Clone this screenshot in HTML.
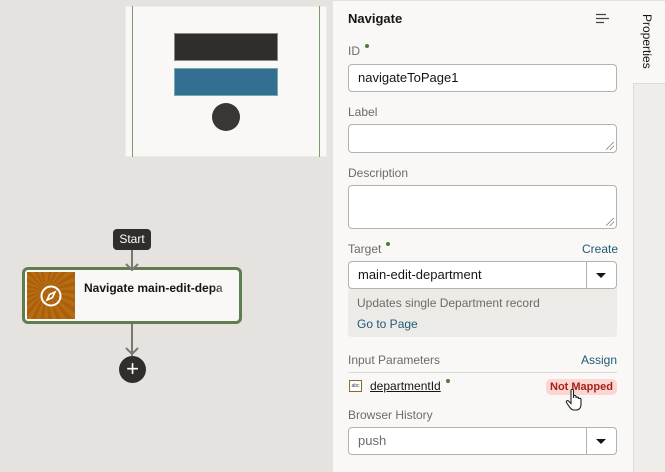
<!DOCTYPE html><html><head><style>
*{box-sizing:border-box;margin:0;padding:0}
body{width:665px;height:472px;position:relative;overflow:hidden;background:#e5e2df;font-family:"Liberation Sans",sans-serif;color:#161513}
.a{position:absolute}
.lbl{position:absolute;left:348px;font-size:12px;color:#6f6a65}
.inp{position:absolute;left:348px;width:269px;background:#fff;border:1px solid #b5b2ae;border-radius:4px;font-size:13px;padding-left:9px}
.dot{display:inline-block;width:4px;height:4px;border-radius:2px;background:#4f7a3f;vertical-align:top;margin-left:5px;margin-top:0}
.lnk{position:absolute;font-size:12px;color:#1f5a78}
.grip{position:absolute;right:2px;bottom:2px;width:8px;height:8px;background:linear-gradient(135deg,transparent 45%,#777 45%,#777 52%,transparent 52%,transparent 70%,#777 70%,#777 77%,transparent 77%)}
.sel{position:absolute;right:0;top:0;width:30px;height:100%;border-left:1px solid #b5b2ae}
.sel:after{content:"";position:absolute;left:9px;top:11px;border-left:5px solid transparent;border-right:5px solid transparent;border-top:5px solid #161513}
</style></head><body>
<!-- minimap -->
<div class="a" style="left:125px;top:6px;width:202px;height:151px;background:#f9f8f6;border:1px solid #ecebe8"></div>
<div class="a" style="left:132px;top:6px;width:1px;height:151px;background:#7c9a6e"></div>
<div class="a" style="left:319px;top:6px;width:1px;height:151px;background:#7c9a6e"></div>
<div class="a" style="left:174px;top:33px;width:104px;height:28px;background:#312d2a;border:1px solid #888"></div>
<div class="a" style="left:174px;top:68px;width:104px;height:28px;background:#336f90;border:1px solid #7aa"></div>
<div class="a" style="left:212px;top:103px;width:28px;height:28px;border-radius:14px;background:#3a3633"></div>
<!-- flow -->
<div class="a" style="left:131px;top:248px;width:2px;height:20px;background:#7a7773"></div>
<div class="a" style="left:113px;top:229px;width:38px;height:21px;background:#312d2a;color:#fff;font-size:12px;border-radius:4px;text-align:center;line-height:21px">Start</div>
<div class="a" style="left:131px;top:322px;width:2px;height:34px;background:#7a7773"></div>
<div class="a" style="left:22px;top:267px;width:220px;height:57px;border:3px solid #607d4f;border-radius:6px;background:#f9f8f6"></div>
<div class="a" style="left:27px;top:272px;width:48px;height:47px;background:repeating-conic-gradient(from 0deg at 40% 40%,#b86c12 0deg 8deg,#a95f0c 8deg 16deg)"></div>
<svg class="a" style="left:39px;top:284px" width="24" height="24" viewBox="0 0 24 24"><circle cx="12" cy="12" r="9.5" fill="none" stroke="#fff" stroke-width="2"/><path d="M16 8 L13.5 13.5 L8 16 L10.5 10.5Z" fill="none" stroke="#fff" stroke-width="1.6"/></svg>
<div class="a" style="left:84px;top:281px;font-size:12px;font-weight:bold;white-space:nowrap;width:144px;overflow:hidden">Navigate main-edit-depa</div>
<div class="a" style="left:212px;top:275px;width:22px;height:20px;background:linear-gradient(90deg,rgba(249,248,246,0),#f9f8f6)"></div>
<div class="a" style="left:119px;top:356px;width:27px;height:27px;border-radius:14px;background:#312d2a;color:#fff;text-align:center;font-size:22px;line-height:26px">+</div>
<svg class="a" style="left:124px;top:262px" width="16" height="10"><path d="M2 2 L8 8 L14 2" fill="none" stroke="#7a7773" stroke-width="2"/></svg>
<svg class="a" style="left:124px;top:346px" width="16" height="10"><path d="M2 2 L8 8 L14 2" fill="none" stroke="#7a7773" stroke-width="2"/></svg>
<!-- panel -->
<div class="a" style="left:333px;top:0;width:332px;height:472px;background:#f9f8f6;border-top:1px solid #e3e1de"></div>
<div class="a" style="left:633px;top:83px;width:32px;height:389px;background:#efedea;border-left:1px solid #dedbd7;border-top:1px solid #dedbd7"></div>
<div class="a" style="left:640px;top:14px;font-size:12px;writing-mode:vertical-rl;color:#161513">Properties</div>
<div class="a" style="left:348px;top:11px;font-size:13px;font-weight:bold">Navigate</div>
<svg class="a" style="left:595px;top:13px" width="16" height="12"><path d="M1 1.5H11M1 5.5H14M1 9.5H9" stroke="#444" stroke-width="1.2"/></svg>
<div class="lbl" style="top:44px">ID<span class="dot"></span></div>
<div class="inp" style="top:64px;height:28px;line-height:26px">navigateToPage1</div>
<div class="lbl" style="top:105px">Label</div>
<div class="inp" style="top:124px;height:29px"><div class="grip"></div></div>
<div class="lbl" style="top:166px">Description</div>
<div class="inp" style="top:185px;height:44px"><div class="grip"></div></div>
<div class="lbl" style="top:242px">Target<span class="dot"></span></div>
<div class="lnk" style="left:582px;top:242px">Create</div>
<div class="a" style="left:348px;top:287px;width:269px;height:50px;background:#edebe8;border-radius:0 0 4px 4px"></div>
<div class="inp" style="top:261px;height:28px;line-height:26px">main-edit-department<div class="sel"></div></div>
<div class="a" style="left:357px;top:296px;font-size:12px;color:#6f6a65">Updates single Department record</div>
<div class="lnk" style="left:357px;top:317px">Go to Page</div>
<div class="lbl" style="top:353px">Input Parameters</div>
<div class="lnk" style="left:581px;top:353px">Assign</div>
<div class="a" style="left:348px;top:372px;width:269px;height:1px;background:#dcd9d5"></div>
<div class="a" style="left:349px;top:380px;width:13px;height:12px;border:1px solid #8a6a2a;background:#fff;font-size:5px;text-align:center;line-height:10px;color:#335">abc</div>
<div class="a" style="left:370px;top:379px;font-size:12px;text-decoration:underline">departmentId<span class="dot" style="text-decoration:none"></span></div>
<div class="a" style="left:546px;top:379px;width:71px;height:16px;background:#fbd6d3;border-radius:5px;color:#a3231b;font-size:11px;font-weight:bold;text-align:center;line-height:16px">Not Mapped</div>
<svg class="a" style="left:565px;top:388px" width="20" height="24" viewBox="0 0 20 24"><path d="M6 2.5 C6 1 8.5 1 8.5 2.5 V10 V8.5 C8.5 7 11 7 11 8.5 V10 C11 8.8 13.5 8.8 13.5 10 V11 C13.5 10 16 10 16 11.5 V16 C16 20 14 22 11 22 H9 C7 22 6 21 4.5 19 L1.5 14.5 C0.8 13 2.5 12 3.5 13 L6 15.5Z" fill="#fff" stroke="#222" stroke-width="1.1"/></svg>
<div class="lbl" style="top:408px">Browser History</div>
<div class="inp" style="top:427px;height:28px;line-height:26px;color:#6f6a65">push<div class="sel"></div></div>
</body></html>
